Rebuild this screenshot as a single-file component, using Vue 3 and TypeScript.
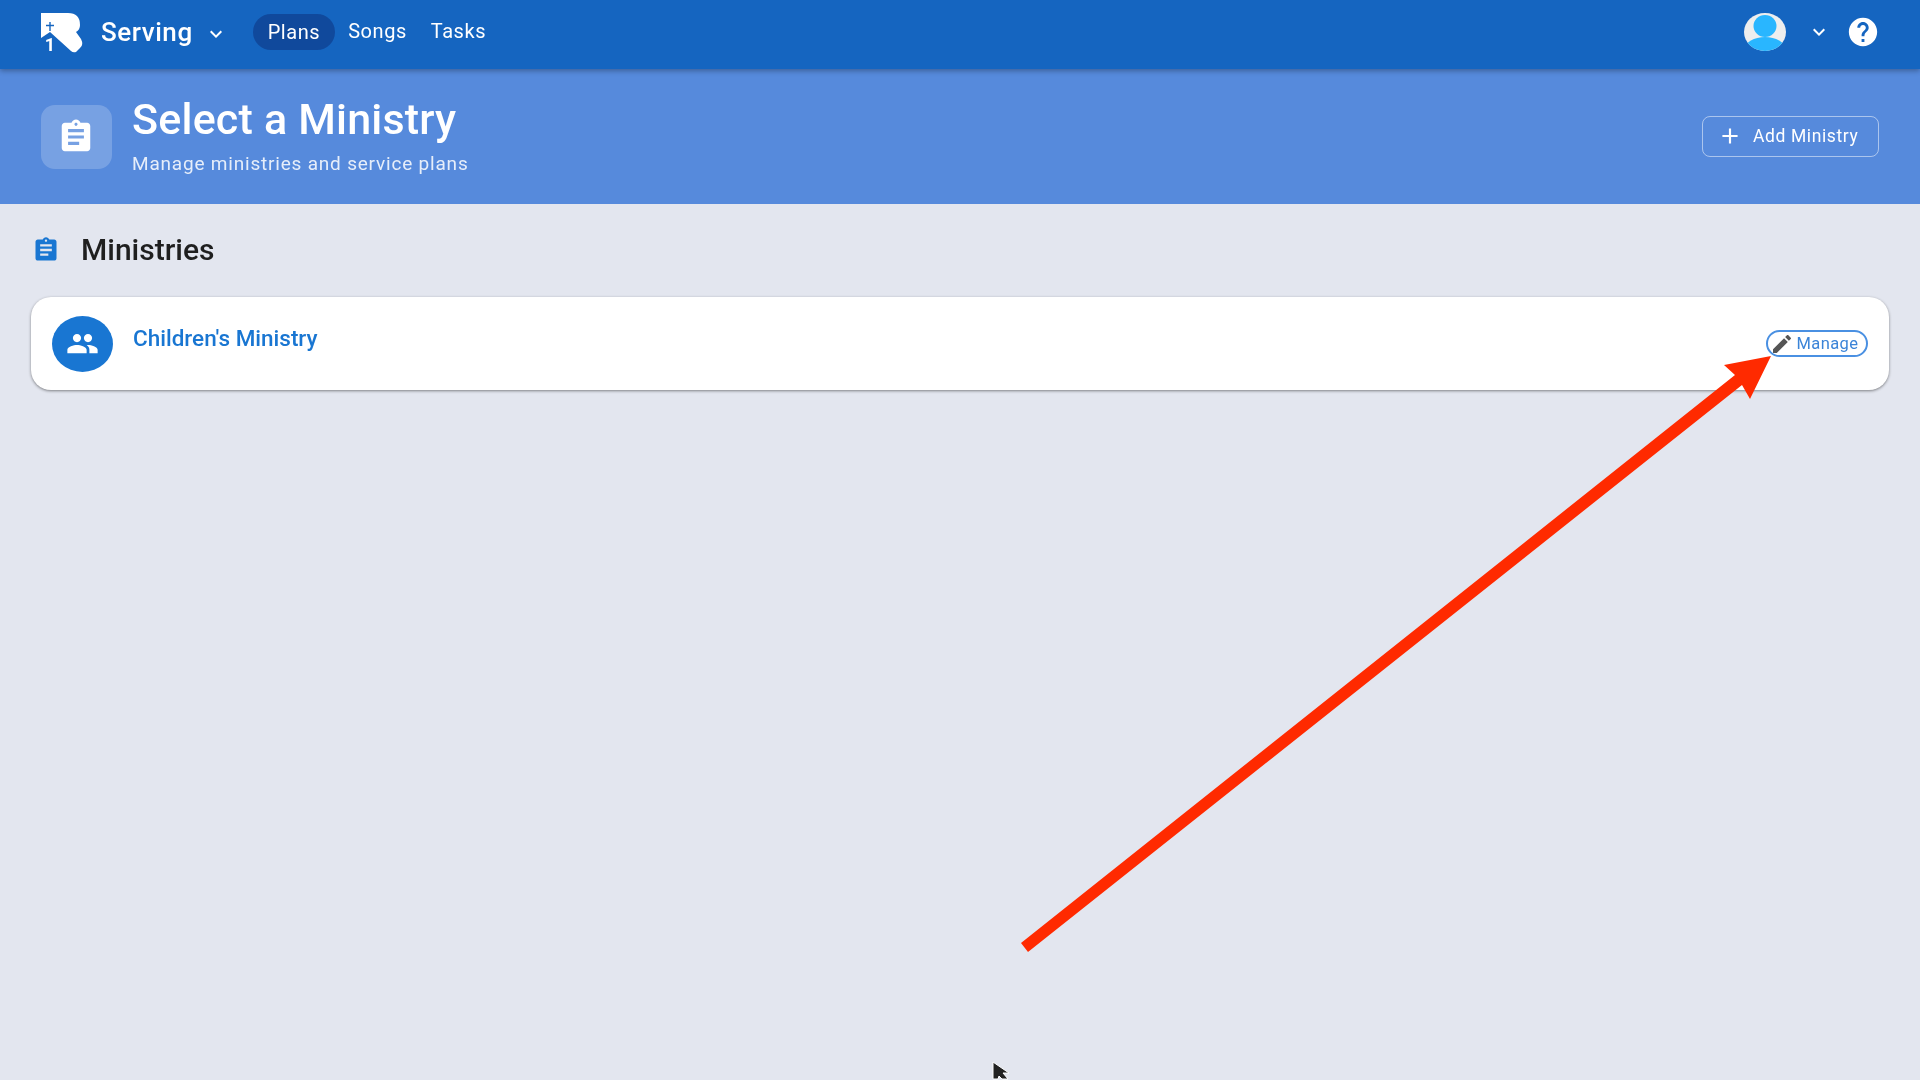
<script setup lang="ts">
const assignment =
  'M19 3h-4.18C14.4 1.84 13.3 1 12 1c-1.3 0-2.4.84-2.82 2H5c-1.1 0-2 .9-2 2v14c0 1.1.9 2 2 2h14c1.1 0 2-.9 2-2V5c0-1.1-.9-2-2-2zm-7 0c.55 0 1 .45 1 1s-.45 1-1 1-1-.45-1-1 .45-1 1-1zm2 14H7v-2h7v2zm3-4H7v-2h10v2zm0-4H7V7h10v2z'
const chevron = 'M7.41 8.59 12 13.17l4.59-4.58L18 10l-6 6-6-6z'
const navItems = ['Plans', 'Songs', 'Tasks']
</script>

<template>
  <div class="page">
    <header class="topbar">
      <svg class="logo" viewBox="0 0 44 42" aria-hidden="true">
        <path
          d="M1 1H28Q40 1 40 13Q40 18 36 20L41 27Q44 33 40 36L36 40Q33 41 31 39L10 20L1 26Z"
          fill="#fff"
        />
        <path d="M10 10V19M6 13.5H14" stroke="#1565c0" stroke-width="1.4" fill="none" />
        <text x="10" y="39" text-anchor="middle" class="logo-one">1</text>
      </svg>
      <span class="app-name">Serving</span>
      <svg class="chev app-chev" viewBox="0 0 24 24"><path :d="chevron" /></svg>
      <nav class="nav">
        <a
          v-for="(item, i) in navItems"
          :key="item"
          class="nav-item"
          :class="{ 'nav-item--active': i === 0 }"
        >{{ item }}</a>
      </nav>
      <div class="topbar-right">
        <svg class="avatar" viewBox="0 0 42 38" aria-hidden="true">
          <defs>
            <clipPath id="avatar-clip"><ellipse cx="21" cy="19" rx="21" ry="19" /></clipPath>
          </defs>
          <g clip-path="url(#avatar-clip)">
            <rect width="42" height="38" fill="#eeeeee" />
            <ellipse cx="21" cy="13" rx="11.5" ry="11" fill="#29b6ff" />
            <ellipse cx="21" cy="36" rx="20" ry="12" fill="#29b6ff" />
          </g>
        </svg>
        <svg class="chev user-chev" viewBox="0 0 24 24"><path :d="chevron" /></svg>
        <svg class="help" viewBox="0 0 24 24">
          <path
            d="M12 2C6.48 2 2 6.48 2 12s4.48 10 10 10 10-4.48 10-10S17.52 2 12 2zm1 17h-2v-2h2v2zm2.07-7.75l-.9.92C13.45 12.9 13 13.5 13 15h-2v-.5c0-1.1.45-2.1 1.17-2.83l1.24-1.26c.37-.36.59-.86.59-1.41 0-1.1-.9-2-2-2s-2 .9-2 2H8c0-2.21 1.79-4 4-4s4 1.79 4 4c0 .88-.36 1.68-.93 2.25z"
          />
        </svg>
      </div>
    </header>

    <section class="banner">
      <div class="banner-icon">
        <svg viewBox="0 0 24 24"><path :d="assignment" /></svg>
      </div>
      <div class="banner-text">
        <h1 class="banner-title">Select a Ministry</h1>
        <p class="banner-sub">Manage ministries and service plans</p>
      </div>
      <button class="add-btn">
        <svg viewBox="0 0 24 24"><path d="M19 13h-6v6h-2v-6H5v-2h6V5h2v6h6v2z" /></svg>
        Add Ministry
      </button>
    </section>

    <main class="content">
      <div class="section-head">
        <svg class="section-icon" viewBox="0 0 24 24"><path :d="assignment" /></svg>
        <h2 class="section-title">Ministries</h2>
      </div>
      <div class="card">
        <div class="card-avatar">
          <svg viewBox="0 0 24 24">
            <path
              d="M16 11c1.66 0 2.99-1.34 2.99-3S17.66 5 16 5c-1.66 0-3 1.34-3 3s1.34 3 3 3zm-8 0c1.66 0 2.99-1.34 2.99-3S9.66 5 8 5C6.34 5 5 6.34 5 8s1.34 3 3 3zm0 2c-2.33 0-7 1.17-7 3.5V19h14v-2.5c0-2.33-4.67-3.5-7-3.5zm8 0c-.29 0-.62.02-.97.05 1.16.84 1.97 1.97 1.97 3.45V19h6v-2.5c0-2.33-4.67-3.5-7-3.5z"
            />
          </svg>
        </div>
        <a class="card-name">Children's Ministry</a>
        <button class="manage-btn">
          <svg viewBox="0 0 24 24">
            <path
              d="M3 17.25V21h3.75L17.81 9.94l-3.75-3.75L3 17.25zM20.71 7.04c.39-.39.39-1.02 0-1.41l-2.34-2.34c-.39-.39-1.02-.39-1.41 0l-1.83 1.83 3.75 3.75 1.83-1.83z"
            />
          </svg>
          Manage
        </button>
      </div>
    </main>

    <!-- annotation drawn over the page -->
    <svg class="annotation" viewBox="0 0 1920 1080" aria-hidden="true">
      <polygon points="1021,943 1735,375 1724,365 1771,356 1750,399 1742,385 1028,952" fill="#ff2a00" />
      <path
        d="M993 1062v17h5l1-3 3 3h6l-5-6h6z"
        fill="#222"
        stroke="#fff"
        stroke-width="1"
      />
    </svg>
  </div>
</template>

<style scoped>
.page {
  position: relative;
  width: 1920px;
  height: 1080px;
  overflow: hidden;
  background: #e3e6ef;
  font-family: Roboto, 'Liberation Sans', sans-serif;
  filter: blur(0.5px);
}

.topbar {
  position: relative;
  z-index: 1;
  display: flex;
  align-items: center;
  height: 69px;
  padding: 0 40px;
  box-sizing: border-box;
  background: #1565c0;
  color: #fff;
  box-shadow: 0 2px 5px rgba(0, 0, 0, 0.3);
}

.logo {
  width: 44px;
  height: 42px;
  margin-top: -4px;
}

.logo-one {
  font-family: Roboto, sans-serif;
  font-size: 18px;
  font-weight: 700;
  fill: #fff;
}

.app-name {
  margin-left: 17px;
  font-size: 26px;
  font-weight: 500;
  letter-spacing: 0.55px;
  margin-top: -6px;
}

.chev {
  width: 24px;
  height: 24px;
  fill: #fff;
}

.app-chev {
  margin-left: 11px;
  margin-top: -2px;
}

.nav {
  display: flex;
  align-items: center;
  margin-left: 25px;
  margin-top: -5px;
}

.nav-item {
  padding: 0 15px;
  font-size: 20px;
  line-height: 36px;
  letter-spacing: 0.55px;
  margin-top: -3px;
}

.nav-item + .nav-item {
  padding: 0 11px 0 13px;
}

.nav-item--active {
  margin-top: -1px;
  border-radius: 18px;
  background: #10499c;
}

.topbar-right {
  display: flex;
  align-items: center;
  margin-left: auto;
  margin-top: -5px;
}

.avatar {
  width: 42px;
  height: 38px;
}

.user-chev {
  margin-left: 21px;
}

.help {
  width: 34px;
  height: 34px;
  margin-left: 15px;
  fill: #fff;
}

.banner {
  display: flex;
  align-items: center;
  height: 135px;
  padding: 0 41px;
  box-sizing: border-box;
  background: #568adc;
  color: #fff;
}

.banner-icon {
  display: flex;
  align-items: center;
  justify-content: center;
  width: 71px;
  height: 64px;
  border-radius: 14px;
  background: rgba(255, 255, 255, 0.2);
}

.banner-icon svg {
  width: 38px;
  height: 38px;
  margin-right: 2px;
  fill: #fff;
}

.banner-text {
  margin-left: 20px;
  padding-top: 3.5px;
}

.banner-title {
  margin: 0;
  font-size: 43px;
  font-weight: 500;
  line-height: 48px;
  letter-spacing: 0.2px;
  margin-top: -6px;
}

.banner-sub {
  margin: 8.5px 0 0;
  font-size: 19px;
  line-height: 24px;
  letter-spacing: 0.8px;
  color: rgba(255, 255, 255, 0.85);
}

.add-btn {
  display: flex;
  align-items: center;
  margin-left: auto;
  width: 177px;
  height: 41px;
  padding: 0 0 2px 14px;
  box-sizing: border-box;
  border: 1.5px solid rgba(255, 255, 255, 0.5);
  border-radius: 8px;
  background: transparent;
  color: #fff;
  font-family: inherit;
  font-size: 17.5px;
  letter-spacing: 0.6px;
}

.add-btn svg {
  width: 26px;
  height: 26px;
  margin-right: 10px;
  fill: #fff;
}

.content {
  padding: 30px 31px 0;
}

.section-head {
  display: flex;
  align-items: center;
  height: 32px;
}

.section-icon {
  width: 28px;
  height: 28px;
  fill: #1976d2;
  margin-left: 1px;
}

.section-title {
  margin: -2px 0 0 21px;
  font-size: 30px;
  font-weight: 500;
  color: #1f1f1f;
}

.card {
  display: flex;
  align-items: center;
  height: 93px;
  margin-top: 31px;
  padding: 0 21px;
  box-sizing: border-box;
  border-radius: 20px;
  background: #fff;
  box-shadow: 0 1px 3px rgba(0, 0, 0, 0.45);
}

.card-avatar {
  display: flex;
  align-items: center;
  justify-content: center;
  width: 61px;
  height: 56px;
  border-radius: 50%;
  background: #1976d2;
}

.card-avatar svg {
  width: 33px;
  height: 33px;
  margin-top: -1px;
  fill: #fff;
}

.card-name {
  margin-left: 20px;
  margin-top: -11px;
  font-size: 22.5px;
  font-weight: 500;
  color: #1976d2;
}

.manage-btn {
  display: flex;
  align-items: center;
  margin-left: auto;
  height: 27px;
  width: 102px;
  padding: 0 0 0 2px;
  box-sizing: border-box;
  border: 2px solid #4a90e2;
  border-radius: 14px;
  background: #fff;
  color: #3b84d8;
  font-family: inherit;
  font-size: 16.5px;
  letter-spacing: 0.4px;
}

.manage-btn svg {
  width: 24px;
  height: 24px;
  margin-right: 2.5px;
  fill: #555;
}

.annotation {
  position: absolute;
  inset: 0;
  z-index: 2;
  width: 1920px;
  height: 1080px;
  pointer-events: none;
}
</style>
